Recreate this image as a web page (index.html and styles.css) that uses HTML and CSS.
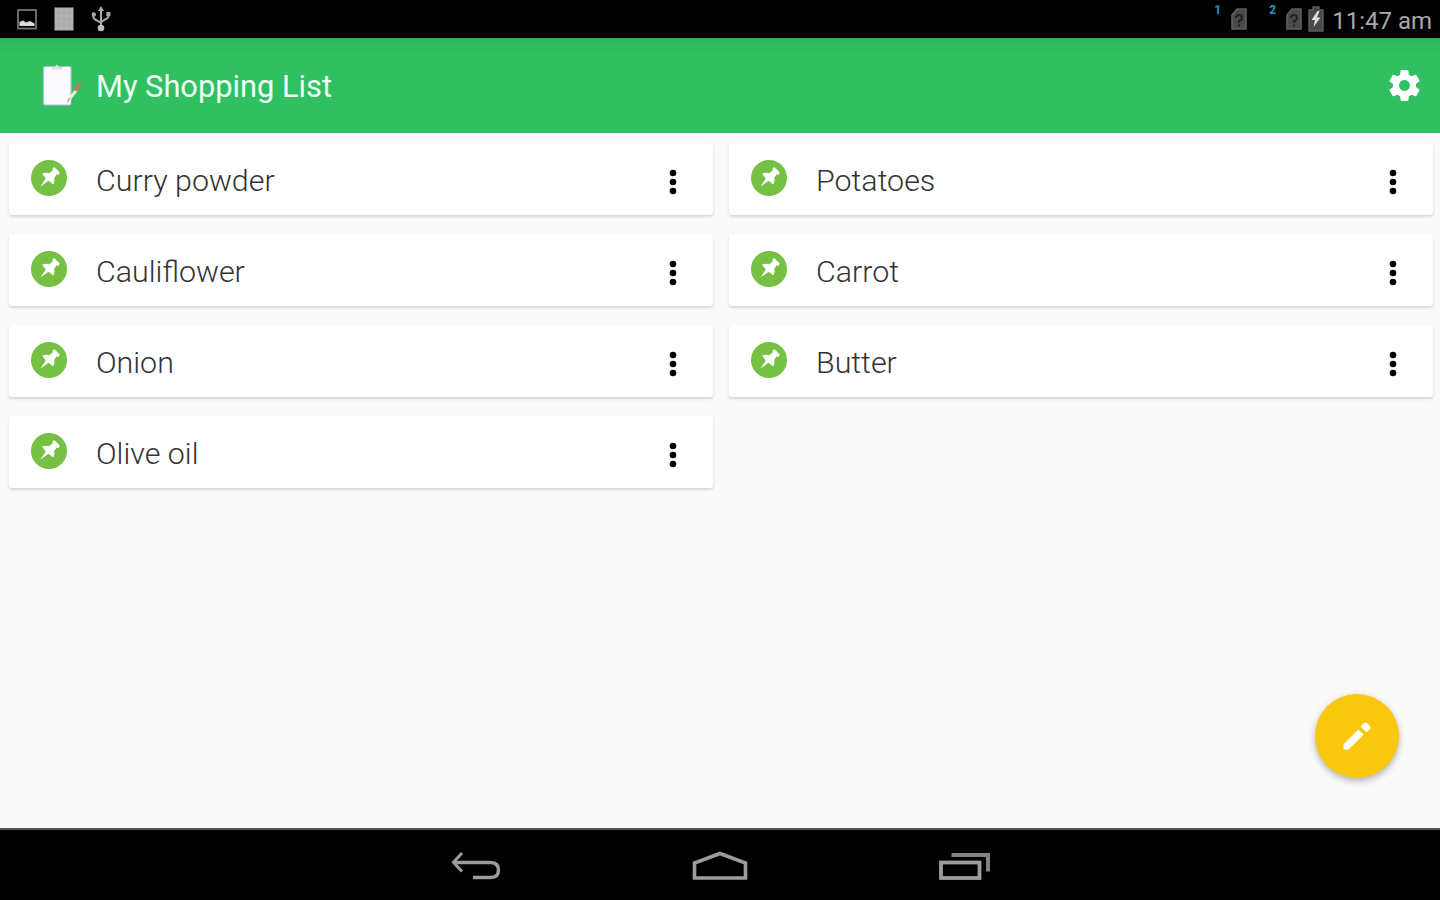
FILE: index.html
```html
<!DOCTYPE html>
<html lang="en">
<head>
  <meta charset="UTF-8" />
  <meta name="viewport" content="width=device-width, initial-scale=1.0"/>
  <title>My Shopping List</title>
  <link rel="stylesheet" href="styles.css">
</head>
<body>
  <!-- shared icons -->
  <svg class="defs" width="0" height="0">
    <symbol id="pin" viewBox="0 0 36 36">
      <circle cx="18" cy="18" r="18" fill="#76c043"/>
      <path fill="#fff" d="M23.2 7 L28.8 12.6 L27.4 15 L25.6 14.6 L23.2 18 Q24.2 21.6 22.2 24.4 L17.6 20.8 L9.4 26.6 L14.8 18.4 L11 13.8 Q14.2 12 18 13.2 L21.8 10.4 L21.4 8.4 Z"/>
    </symbol>
    <symbol id="dots" viewBox="0 0 8 26">
      <circle cx="4" cy="4" r="3.3"/>
      <circle cx="4" cy="13" r="3.3"/>
      <circle cx="4" cy="22" r="3.3"/>
    </symbol>
    <symbol id="sim" viewBox="0 0 16 22">
      <path d="M6 1 H15 V21 H1 V7 Z" fill="#4a4a4a" stroke="#5e5e5e" stroke-width="1.6"/>
      <path d="M5 10 Q5 7 8 7 Q11 7 11 10 Q11 12 8 13 V15 M8 16.5 V18.5" fill="none" stroke="#222" stroke-width="2"/>
    </symbol>
  </svg>

  <div class="status-bar">
    <div class="status-left">
      <svg width="20" height="21" viewBox="0 0 20 21">
        <rect x="1" y="1" width="18" height="18.5" fill="none" stroke="#757575" stroke-width="1.8"/>
        <path d="M2.5 17 V13 L6 11.5 L9 13.5 L13 12 L17.5 14.5 V17 Z" fill="#ddd"/>
      </svg>
      <svg width="20" height="24" viewBox="0 0 20 24">
        <rect x="0.5" y="0.5" width="19" height="23" fill="#b2b2b2"/>
        <path d="M5 1 V23 M10 1 V23 M15 1 V23 M1 6 H19 M1 12 H19 M1 18 H19" stroke="#a9a9a9" stroke-width="1"/>
      </svg>
      <svg width="20" height="26" viewBox="0 0 20 26">
        <path d="M10 3 V22 M2.5 8 V11 Q2.5 13 5 14 L10 17 M17.5 6 V10 Q17.5 12 15 13 L10 16" fill="none" stroke="#aaa" stroke-width="2"/>
        <path d="M10 0 L13 5 H7 Z" fill="#aaa"/>
        <circle cx="2.8" cy="8.5" r="2.2" fill="#aaa"/>
        <rect x="15.4" y="6" width="4" height="4" fill="#aaa"/>
        <circle cx="10" cy="22" r="3.3" fill="#bbb"/>
      </svg>
    </div>
    <div class="status-right">
      <span class="sim-no">1</span>
      <svg class="sim" width="16" height="22"><use href="#sim"/></svg>
      <span class="sim-no second">2</span>
      <svg class="sim" width="16" height="22"><use href="#sim"/></svg>
      <svg class="battery" width="16" height="26" viewBox="0 0 16 26">
        <path d="M5 1 H11 V4 H15 V25 H1 V4 H5 Z" fill="#484848" stroke="#5e5e5e" stroke-width="1.4"/>
        <path d="M9.5 5 L3.5 14 H7 L5.5 21 L12.5 11.5 H9 L11.5 5 Z" fill="#dcdcdc"/>
      </svg>
      <span class="clock">11:47 am</span>
    </div>
  </div>

  <header class="app-bar">
    <svg class="logo" width="42" height="44" viewBox="0 0 42 44">
      <rect x="2.5" y="2.5" width="27.5" height="38.5" rx="1.5" fill="#fbfaff" stroke="#b9bcd8" stroke-width="1.2"/>
      <path d="M11 5.5 V3 H14 Q16 -1.5 18 3 H21 V5.5 Z" fill="#dcdfe6"/>
      <path d="M28 35.5 L35.5 26" stroke="#e8efd8" stroke-width="3"/>
      <path d="M34 26.5 L39.5 19.5" stroke="#d9705a" stroke-width="3.4"/>
      <path d="M26.5 38 L28.5 34" stroke="#e59a98" stroke-width="1.6"/>
    </svg>
    <h1>My Shopping List</h1>
    <svg class="gear" width="37" height="37" viewBox="0 0 24 24">
      <path fill="#fff" d="M19.43 12.98c.04-.32.07-.64.07-.98s-.03-.66-.07-.98l2.11-1.65c.19-.15.24-.42.12-.64l-2-3.46c-.12-.22-.39-.3-.61-.22l-2.49 1c-.52-.4-1.08-.73-1.69-.98l-.38-2.65C14.46 2.18 14.25 2 14 2h-4c-.25 0-.46.18-.49.42l-.38 2.65c-.61.25-1.17.59-1.69.98l-2.49-1c-.23-.09-.49 0-.61.22l-2 3.46c-.13.22-.07.49.12.64l2.11 1.65c-.04.32-.07.65-.07.98s.03.66.07.98l-2.11 1.65c-.19.15-.24.42-.12.64l2 3.46c.12.22.39.3.61.22l2.49-1c.52.4 1.08.73 1.69.98l.38 2.65c.03.24.24.42.49.42h4c.25 0 .46-.18.49-.42l.38-2.65c.61-.25 1.17-.59 1.69-.98l2.49 1c.23.09.49 0 .61-.22l2-3.46c.12-.22.07-.49-.12-.64l-2.11-1.65zM12 15.5c-1.93 0-3.5-1.57-3.5-3.5s1.57-3.5 3.5-3.5 3.5 1.57 3.5 3.5-1.57 3.5-3.5 3.5z"/>
    </svg>
  </header>

  <main class="content">
    <div class="list">
      <div class="card">
        <svg class="pin" width="36" height="36"><use href="#pin"/></svg>
        <span class="name">Curry powder</span>
        <svg class="dots" width="8" height="26"><use href="#dots"/></svg>
      </div>
      <div class="card">
        <svg class="pin" width="36" height="36"><use href="#pin"/></svg>
        <span class="name">Potatoes</span>
        <svg class="dots" width="8" height="26"><use href="#dots"/></svg>
      </div>
      <div class="card">
        <svg class="pin" width="36" height="36"><use href="#pin"/></svg>
        <span class="name">Cauliflower</span>
        <svg class="dots" width="8" height="26"><use href="#dots"/></svg>
      </div>
      <div class="card">
        <svg class="pin" width="36" height="36"><use href="#pin"/></svg>
        <span class="name">Carrot</span>
        <svg class="dots" width="8" height="26"><use href="#dots"/></svg>
      </div>
      <div class="card">
        <svg class="pin" width="36" height="36"><use href="#pin"/></svg>
        <span class="name">Onion</span>
        <svg class="dots" width="8" height="26"><use href="#dots"/></svg>
      </div>
      <div class="card">
        <svg class="pin" width="36" height="36"><use href="#pin"/></svg>
        <span class="name">Butter</span>
        <svg class="dots" width="8" height="26"><use href="#dots"/></svg>
      </div>
      <div class="card">
        <svg class="pin" width="36" height="36"><use href="#pin"/></svg>
        <span class="name">Olive oil</span>
        <svg class="dots" width="8" height="26"><use href="#dots"/></svg>
      </div>
    </div>

    <button class="fab" aria-label="Edit">
      <svg width="30" height="30" viewBox="0 0 30 30">
        <path d="M4.5 25.5 L19 11" stroke="#fff" stroke-width="7.4"/>
        <path d="M1.5 28.5 V22.5 L7.5 28.5 Z" fill="#fff"/>
        <path d="M18.6 5.4 L22 2 Q23.5 0.8 25 2 L28 5 Q29.2 6.5 28 8 L24.6 11.4 Z" fill="#fff"/>
      </svg>
    </button>
  </main>

  <nav class="nav-bar">
    <svg width="50" height="32" viewBox="0 0 50 32">
      <path d="M3 11.5 H40 Q47.5 12 47.5 19 Q47.5 26.5 40 26.5 H22" fill="none" stroke="#9c9c9c" stroke-width="3.4"/>
      <path d="M11 2 L2.5 11.2 L11 20.5" fill="none" stroke="#9c9c9c" stroke-width="3"/>
    </svg>
    <svg width="56" height="32" viewBox="0 0 56 32">
      <path d="M2.5 27 V12 L28 2.5 L53.5 12 V27 Z" fill="none" stroke="#9c9c9c" stroke-width="3.6"/>
    </svg>
    <svg width="52" height="32" viewBox="0 0 52 32">
      <rect x="2" y="11.5" width="38.5" height="15.5" fill="none" stroke="#9c9c9c" stroke-width="3.8"/>
      <path d="M12.5 4 H49 V20.5" fill="none" stroke="#828282" stroke-width="4"/>
    </svg>
  </nav>
</body>
</html>
```
FILE: styles.css
```css
* {
  box-sizing: border-box;
}

body {
  margin: 0;
  height: 900px;
  display: flex;
  flex-direction: column;
  background: #fafafa;
  font-family: Roboto, sans-serif;
  overflow: hidden;
}

svg {
  display: block;
  flex: none;
}

.defs {
  position: absolute;
}

.status-bar {
  height: 38px;
  background: #000;
  display: flex;
  justify-content: space-between;
}

.status-left {
  display: flex;
  align-items: center;
  gap: 17px;
  padding-left: 17px;
}

.status-right {
  display: flex;
  align-items: center;
  padding-right: 8px;
}

.sim-no {
  align-self: flex-start;
  color: #1b9cc4;
  font-size: 12px;
  font-weight: bold;
  line-height: 20px;
  width: 7px;
  margin-right: 10px;
}

.sim-no.second {
  margin-left: 22px;
}

.battery {
  margin: 0 8px 0 6px;
}

.clock {
  color: #a8a8a8;
  font-size: 24px;
  line-height: 36px;
  padding-top: 3px;
  white-space: nowrap;
}

.app-bar {
  height: 95px;
  background: linear-gradient(#2db55c, #30bf61 14px, #30bf61 91px, #2bb95a);
  display: flex;
  align-items: center;
  padding: 0 17px 0 41px;
}

h1 {
  margin: 2px 0 0 13px;
  color: #f2fff4;
  font-size: 30.8px;
  font-weight: 400;
  flex: 1;
}

.content {
  height: 695px;
  position: relative;
  padding: 10px 7px 0 9px;
}

.list {
  display: grid;
  grid-template-columns: 1fr 1fr;
  column-gap: 16px;
  row-gap: 19px;
}

.card {
  height: 72px;
  background: #fff;
  border-radius: 3px;
  box-shadow: 0 2px 3px rgba(0,0,0,0.14);
  display: flex;
  align-items: center;
  padding: 0 36px 0 22px;
}

.pin {
  margin-top: -2px;
}

.name {
  flex: 1;
  margin-left: 29px;
  padding-top: 3px;
  color: #333;
  font-size: 30.4px;
  font-weight: 300;
}

.dots {
  margin-top: 5px;
}

.fab {
  position: absolute;
  right: 41px;
  top: 561px;
  width: 84px;
  height: 84px;
  padding: 0;
  border: none;
  border-radius: 50%;
  background: #f9c80c;
  box-shadow: 0 3px 7px rgba(0,0,0,0.3);
  display: flex;
  align-items: center;
  justify-content: center;
}

.nav-bar {
  height: 72px;
  background: #000;
  border-top: 2px solid #555;
  display: flex;
  justify-content: center;
  align-items: center;
  gap: 191px;
  padding: 4px 0 0 2px;
}
```
